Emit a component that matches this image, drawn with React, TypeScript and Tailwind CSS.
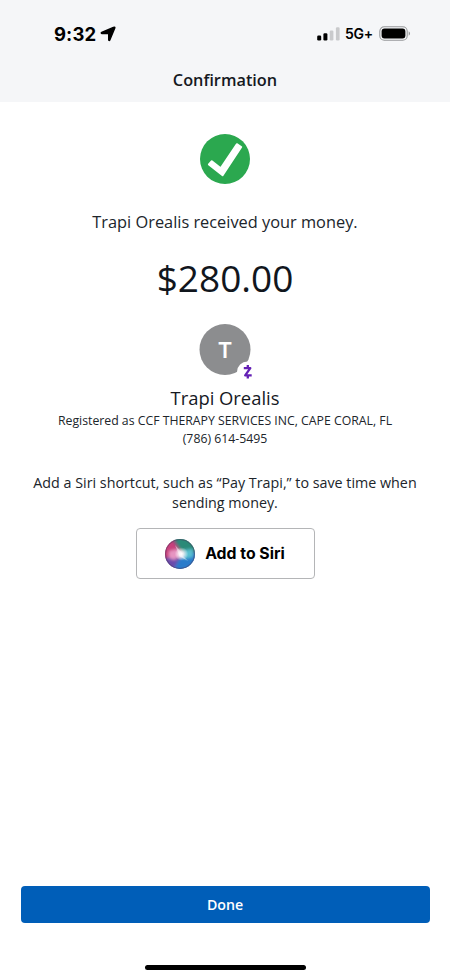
const StatusBar = () => {
    return (
        <div className="flex h-[67px] items-center justify-between pl-[54px] pr-[39px] font-['Inter'] text-black">
            <div className="flex items-center gap-[3px]">
                <span className="w-[43px] whitespace-nowrap text-[18.5px] leading-6 font-bold tracking-[0.1px]">9:32</span>
                <svg className="h-4 w-4" viewBox="0 0 16 16" fill="currentColor" stroke="currentColor" strokeWidth="1.4" strokeLinejoin="round">
                    <path d="M14 1.2c.6-.3 1.1.2.8.8L9.8 14c-.3.7-1.1.5-1.1-.3V8.2c0-.4-.2-.6-.6-.6H2C1.2 7.600 1 6.800 1.700 6.500z" />
                </svg>
            </div>
            <div className="flex items-center">
                <svg className="h-4 w-6" viewBox="0 0 24 16">
                    <rect x="0.2" y="9.5" width="4" height="5" rx="1.2" />
                    <rect x="6.4" y="7.3" width="4" height="7.2" rx="1.2" />
                    <rect x="12.7" y="4.5" width="3.7" height="10" rx="1.2" fill="#c9cacc" />
                    <rect x="18.9" y="1.3" width="3.7" height="13.2" rx="1.2" fill="#c9cacc" />
                </svg>
                <span className="ml-1 w-[29px] whitespace-nowrap text-[14px] leading-5 font-semibold tracking-[-0.3px]">5G+</span>
                <svg className="ml-[5px] h-4 w-8" viewBox="0 0 32 16">
                    <rect x="0.8" y="0.7" width="27.4" height="13.5" rx="4.5" fill="none" stroke="#96989a" strokeWidth="1.1" />
                    <rect x="2.6" y="2.5" width="23.8" height="9.9" rx="2.9" />
                    <path d="M29.7 5.2c1.8.8 1.8 3.7 0 4.5z" fill="#96989a" />
                </svg>
            </div>
        </div>
    )
}

const Avatar = () => {
    return (
        <svg className="mt-5 h-[60px] w-[60px]" viewBox="0 0 60 60">
            <circle cx="30" cy="27.5" r="25.5" fill="#8c8d8f" />
            <text x="30" y="35.5" textAnchor="middle" fill="#fff" className="font-['Inter'] text-[22px] font-semibold">T</text>
            <circle cx="52.5" cy="50" r="10.5" fill="#fff" />
            <path d="M48.800 46.200h6.500L50.200 53.300h6.500M52.800 43v3.200M52.800 53.300v3.200" fill="none" stroke="#6420b5" strokeWidth="2.3" strokeLinejoin="round" />
        </svg>
    )
}

const SiriOrb = () => {
    return (
        <svg className="h-[30px] w-[30px]" viewBox="0 0 30 30">
            <defs>
                <clipPath id="orb"><circle cx="15" cy="15" r="15" /></clipPath>
                <radialGradient id="glow">
                    <stop offset="0" stopColor="#fff" />
                    <stop offset="0.35" stopColor="#fff" stopOpacity="0.8" />
                    <stop offset="1" stopColor="#fff" stopOpacity="0" />
                </radialGradient>
                <filter id="soft" x="-50%" y="-50%" width="200%" height="200%"><feGaussianBlur stdDeviation="1.5" /></filter>
            </defs>
            <g clipPath="url(#orb)">
                <rect width="30" height="30" fill="#5d5a80" />
                <g filter="url(#soft)">
                    <path d="M9 -2h23v15L16 13z" fill="#2a8a78" />
                    <path d="M-2 3l9-3 9 13-3 9-15-1z" fill="#c8407c" />
                    <path d="M-2 20l14-4 6 16H2z" fill="#6a4cac" />
                    <path d="M16 16l17-3v13L16 32 9 30z" fill="#2b7ccb" />
                    <path d="M19 11l9-1v8l-9 2z" fill="#58bfd0" />
                    <path d="M4 12l9-2 4 6-8 5-5-2z" fill="#e795c2" />
                </g>
                <circle cx="16.5" cy="15" r="6.8" fill="url(#glow)" />
                <path d="M15 14l8 8-9-5zM10 6l8 9-4 1z" fill="#fff" opacity="0.45" />
                <circle cx="15" cy="15" r="14.5" fill="none" stroke="#4b3656" strokeWidth="0.9" opacity="0.5" />
            </g>
        </svg>
    )
}

const App = () => {
    return (
        <div className="flex h-[978px] w-[450px] flex-col bg-white font-['Open_Sans',sans-serif] text-[#20252b]">
            <header className="h-[102px] bg-[#f5f6f8]">
                <StatusBar />
                <h1 className="text-center text-[16.3px] leading-[26px] font-semibold text-[#15191f]">Confirmation</h1>
            </header>
            <main className="flex flex-1 flex-col items-center pt-8">
                <svg className="h-[50px] w-[50px]" viewBox="0 0 50 50">
                    <circle cx="25" cy="25" r="25" fill="#2ba84f" />
                    <path d="M36.8 10.2L41.2 13 22.6 41.2 8.9 30.5 11.8 27.2 20.7 34.2z" fill="#fff" stroke="#fff" strokeWidth="2" strokeLinejoin="round" />
                </svg>
                <p className="mt-[26px] text-[16.35px] leading-6">Trapi Orealis received your money.</p>
                <p className="mt-5 text-[37px] leading-[48px] text-[#11161d]">$280.00</p>
                <Avatar />
                <h2 className="mt-1 text-[18.4px] leading-6 text-[#15191f]">Trapi Orealis</h2>
                <p className="mt-[2px] text-[12.27px] leading-[18px] whitespace-nowrap">Registered as CCF THERAPY SERVICES INC, CAPE CORAL, FL</p>
                <p className="text-[12.27px] leading-[18px]">(786) 614-5495</p>
                <p className="mt-[25px] text-center text-[14.3px] leading-5">
                    Add a Siri shortcut, such as “Pay Trapi,” to save time when<br />sending money.
                </p>
                <button className="mt-[15px] flex h-[51px] w-[179px] items-center justify-center gap-[10px] rounded-[4px] border border-[#b4b5b7] text-black">
                    <SiriOrb />
                    <span className="font-['Inter'] text-[15.8px] font-bold whitespace-nowrap">Add to Siri</span>
                </button>
            </main>
            <footer className="flex h-[92px] flex-col items-center">
                <button className="h-[37px] w-[409px] rounded-[4px] bg-[#005eb8] text-[14.2px] font-semibold text-white">Done</button>
                <div className="mt-[42px] h-[5px] w-[161px] rounded-full bg-black" />
            </footer>
        </div>
    )
}

export default App
